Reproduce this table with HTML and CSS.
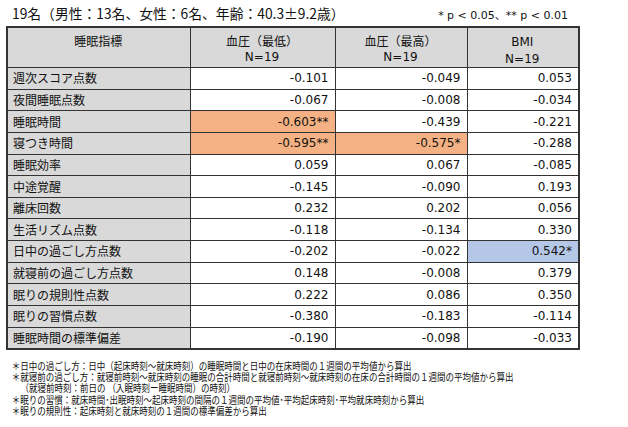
FILE: index.html
```html
<!DOCTYPE html>
<html lang="ja">
<head>
<meta charset="utf-8">
<link rel="stylesheet" href="styles.css">
</head>
<body>
<div class="page">
  <div class="top">
    <span class="title">19名（男性：13名、女性：6名、年齢：40.3±9.2歳）</span>
    <span class="sig">* p &lt; 0.05、** p &lt; 0.01</span>
  </div>
  <table class="tbl">
    <colgroup>
      <col class="c1"><col class="c2"><col class="c3"><col class="c4">
    </colgroup>
    <thead>
      <tr>
        <th>睡眠指標</th>
        <th>血圧（最低）<br><span class="n">N=19</span></th>
        <th>血圧（最高）<br><span class="n">N=19</span></th>
        <th><span class="n">BMI</span><br><span class="n">N=19</span></th>
      </tr>
    </thead>
    <tbody>
      <tr><td class="lbl">週次スコア点数</td><td>-0.101</td><td>-0.049</td><td>0.053</td></tr>
      <tr><td class="lbl">夜間睡眠点数</td><td>-0.067</td><td>-0.008</td><td>-0.034</td></tr>
      <tr><td class="lbl">睡眠時間</td><td class="org">-0.603**</td><td>-0.439</td><td>-0.221</td></tr>
      <tr><td class="lbl">寝つき時間</td><td class="org">-0.595**</td><td class="org">-0.575*</td><td>-0.288</td></tr>
      <tr><td class="lbl">睡眠効率</td><td>0.059</td><td>0.067</td><td>-0.085</td></tr>
      <tr><td class="lbl">中途覚醒</td><td>-0.145</td><td>-0.090</td><td>0.193</td></tr>
      <tr><td class="lbl">離床回数</td><td>0.232</td><td>0.202</td><td>0.056</td></tr>
      <tr><td class="lbl">生活リズム点数</td><td>-0.118</td><td>-0.134</td><td>0.330</td></tr>
      <tr><td class="lbl">日中の過ごし方点数</td><td>-0.202</td><td>-0.022</td><td class="blu">0.542*</td></tr>
      <tr><td class="lbl">就寝前の過ごし方点数</td><td>0.148</td><td>-0.008</td><td>0.379</td></tr>
      <tr><td class="lbl">眠りの規則性点数</td><td>0.222</td><td>0.086</td><td>0.350</td></tr>
      <tr><td class="lbl">眠りの習慣点数</td><td>-0.380</td><td>-0.183</td><td>-0.114</td></tr>
      <tr><td class="lbl">睡眠時間の標準偏差</td><td>-0.190</td><td>-0.098</td><td>-0.033</td></tr>
    </tbody>
  </table>
  <div class="notes">
    <p>＊日中の過ごし方：日中（起床時刻～就床時刻）の睡眠時間と日中の在床時間の１週間の平均値から算出</p>
    <p>＊就寝前の過ごし方：就寝前時刻～就床時刻の睡眠の合計時間と就寝前時刻～就床時刻の在床の合計時間の１週間の平均値から算出</p>
    <p class="ind">（就寝前時刻：前日の （入眠時刻ー睡眠時間）の時刻）</p>
    <p>＊眠りの習慣：就床時間･出眠時刻～起床時刻の間隔の１週間の平均値･平均起床時刻･平均就床時刻から算出</p>
    <p>＊眠りの規則性：起床時刻と就床時刻の１週間の標準偏差から算出</p>
  </div>
</div>
</body>
</html>
```

FILE: styles.css
```css
* { box-sizing: border-box; }
html, body { margin: 0; padding: 0; background: #fff; }
body {
  font-family: "DejaVu Sans", "Noto Sans CJK JP", sans-serif;
  color: #111;
}
.page {
  width: 628px;
  height: 427px;
  padding: 0 0 0 6px;
}
.top {
  display: flex;
  justify-content: space-between;
  align-items: flex-end;
  height: 26px;
  width: 562px;
  padding: 0 0 4px 6px;
}
.title {
  font-family: "Noto Sans CJK JP", sans-serif;
  font-size: 13.8px;
  line-height: 16px;
  position: relative;
  top: -1px;
}
.sig {
  font-size: 11px;
  line-height: 12px;
}
.tbl {
  border-collapse: collapse;
  table-layout: fixed;
  width: 572px;
  border: 2px solid #333;
}
.c1 { width: 183px; }
.c2 { width: 145px; }
.c3 { width: 132px; }
.c4 { width: 112px; }
.tbl th, .tbl td {
  border: 1px solid #333;
  padding: 0 6px 0 5px;
  font-weight: normal;
}
.tbl th {
  background: #d9d9d9;
  height: 37px;
  vertical-align: top;
  text-align: center;
  font-family: "Noto Sans CJK JP", sans-serif;
  font-size: 12px;
  line-height: 15px;
  padding-top: 5px;
}
.tbl th .n {
  font-family: "DejaVu Sans", sans-serif;
  font-size: 12px;
}
.tbl td {
  height: 21.65px;
  font-size: 12px;
  line-height: 14px;
  text-align: right;
  background: #fff;
}
.tbl td.lbl {
  background: #d9d9d9;
  text-align: left;
  font-family: "Noto Sans CJK JP", sans-serif;
}
.tbl td.org { background: #f4b183; }
.tbl td.blu { background: #b4c7e7; }
.notes {
  padding: 10px 0 0 7px;
  font-family: "Noto Sans CJK JP", sans-serif;
  font-size: 10.5px;
  line-height: 11.3px;
  transform: scaleX(0.81);
  transform-origin: 0 0;
  width: 740px;
}
.notes p { margin: 0; white-space: nowrap; }
.notes .ind { padding-left: 11px; }
```
